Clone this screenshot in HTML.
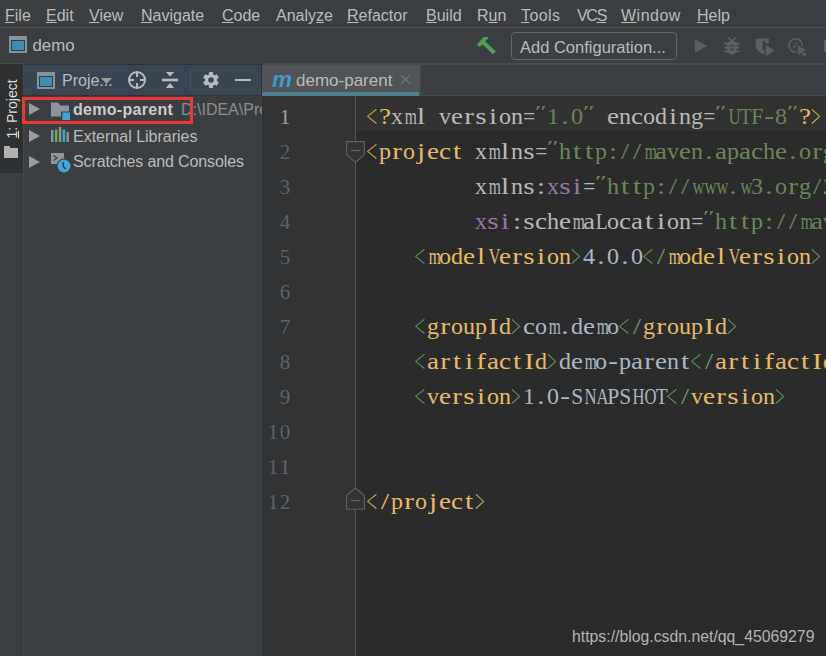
<!DOCTYPE html>
<html><head><meta charset="utf-8">
<style>
*{margin:0;padding:0;box-sizing:border-box}
html,body{width:826px;height:656px;overflow:hidden;background:#3c3f41}
body{position:relative;font-family:"Liberation Sans",sans-serif}
.a{position:absolute}
.t{position:absolute;white-space:pre;line-height:16px;font-size:16px;color:#bbbbbb}
.u{text-decoration:underline;text-underline-offset:1px}
.code{position:absolute;left:367px;white-space:pre;font-family:"Liberation Mono",monospace;font-size:20px;line-height:20px;color:#a9b7c6}
.ln{position:absolute;white-space:pre;font-family:"Liberation Mono",monospace;font-size:20px;line-height:20px;color:#606366;text-align:right;width:30px;left:261px}
.tg{color:#e3bb69}
.b{display:inline-block;vertical-align:top}
.q{display:inline-block;transform:translate(-2px,-6px) scaleY(0.7)}
.at{color:#b8b8b8}
.vl{color:#6a8759}
.ns{color:#9876aa}
.tx{color:#a9b7c6}
.c{display:inline-block;width:12px;text-align:center;font-family:"Liberation Serif",serif;font-weight:normal;font-size:22.5px;transform:translateY(-2px)}
.ln .c{font-size:21px;transform:translateY(-1px)}
</style></head><body>
<!-- menu bar -->
<div class="a" style="left:0;top:0;width:826px;height:27px;background:#3c3f41"></div>
<div class="a" style="left:0;top:27px;width:826px;height:1px;background:#515355"></div>
<div class="t" style="left:5px;top:8px"><span class="u">F</span>ile</div>
<div class="t" style="left:46px;top:8px"><span class="u">E</span>dit</div>
<div class="t" style="left:89px;top:8px"><span class="u">V</span>iew</div>
<div class="t" style="left:141px;top:8px"><span class="u">N</span>avigate</div>
<div class="t" style="left:222px;top:8px"><span class="u">C</span>ode</div>
<div class="t" style="left:276px;top:8px">Analy<span class="u">z</span>e</div>
<div class="t" style="left:347px;top:8px"><span class="u">R</span>efactor</div>
<div class="t" style="left:426px;top:8px"><span class="u">B</span>uild</div>
<div class="t" style="left:477px;top:8px">R<span class="u">u</span>n</div>
<div class="t" style="left:521px;top:8px;letter-spacing:0.4px"><span class="u">T</span>ools</div>
<div class="t" style="left:577px;top:8px;letter-spacing:-1.3px">VC<span class="u">S</span></div>
<div class="t" style="left:621px;top:8px;letter-spacing:0.5px"><span class="u">W</span>indow</div>
<div class="t" style="left:697px;top:8px"><span class="u">H</span>elp</div>

<!-- nav bar -->
<div class="a" style="left:9px;top:36px;width:18px;height:17px;background:#8a9299"></div>
<div class="a" style="left:11px;top:40px;width:14px;height:11px;background:#2f3d48"></div>
<div class="a" style="left:12px;top:41px;width:12px;height:9px;background:#3e8eb1"></div>
<div class="t" style="left:32.5px;top:38px;font-size:16.8px">demo</div>
<!-- hammer -->
<svg class="a" style="left:472px;top:32px" width="30" height="28" viewBox="0 0 30 28">
<path d="M5 12.4 L11.7 5 L16.2 5.1 L16.2 6.4 L13 9.2 L23.9 19.2 L20.9 22.4 L10.5 12.2 L7.5 14.9 Z" fill="#4b9f56"/>
</svg>
<div class="a" style="left:511px;top:32px;width:166px;height:28px;border:1px solid #646769;border-radius:4px"></div>
<div class="t" style="left:520px;top:39px;font-size:16.5px">Add Configuration...</div>
<!-- run icons -->
<svg class="a" style="left:686px;top:30px" width="140" height="32" viewBox="686 30 140 32">
<g fill="#5c5f61">
<path d="M694.8 9.3 L707.2 16.1 L694.8 22.9 Z" transform="translate(0 30)"/>
<path d="M728 37.6 L731.8 41 L735.6 37.6" stroke="#5c5f61" stroke-width="1.6" fill="none"/>
<ellipse cx="732" cy="47.6" rx="5.2" ry="7.2"/>
<rect x="724" y="42.6" width="15.6" height="1.8"/>
<rect x="724" y="46.6" width="15.6" height="1.8"/>
<rect x="724" y="50.6" width="15.6" height="1.8"/>
</g>
<g fill="#3c3f41">
<rect x="730.2" y="45" width="4" height="1.4"/>
<rect x="730.2" y="48.6" width="4" height="1.4"/>
</g>
<path d="M755.8 38.8 Q762.6 37.6 769 38.8 L769 47.5 Q766.5 52 762.6 54.2 Q758 51.8 755.8 48 Z" fill="#5c5f61"/>
<rect x="762.6" y="41" width="2.6" height="9.5" fill="#3c3f41"/>
<path d="M765.2 43.2 L770 43.2 L770 56 L765.2 56 Z" fill="#3c3f41"/>
<path d="M765.9 45 L774.9 50.5 L765.9 56 Z" fill="#5c5f61"/>
<circle cx="795.6" cy="45.4" r="6.7" fill="none" stroke="#5c5f61" stroke-width="1.6"/>
<path d="M796.4 42 L796.1 45.1 L793.4 47.6" stroke="#5c5f61" stroke-width="1.3" fill="none"/>
<path d="M797.2 44 L808 50.7 L803.5 51.8 L807.8 54 L804.5 57.5 L801 53.5 L797.2 56.5 Z" fill="#5c5f61" stroke="#3c3f41" stroke-width="1.2"/>
<rect x="824" y="39.8" width="3" height="12.3" fill="#5c5f61"/>
</svg>

<!-- nav bottom border -->
<div class="a" style="left:0;top:63px;width:24px;height:1px;background:#4a4a4a"></div>
<div class="a" style="left:24px;top:64px;width:238px;height:1px;background:#323232"></div>

<!-- left stripe -->
<div class="a" style="left:0;top:64px;width:23px;height:592px;background:#3c3f41"></div>
<div class="a" style="left:0;top:64px;width:23px;height:109px;background:#2e3031"></div>
<div class="a" style="left:23px;top:63px;width:1px;height:593px;background:#4a4a4a"></div>
<div class="t" style="left:-19.6px;top:101px;width:64px;text-align:center;transform:rotate(-90deg);font-size:14px;color:#dddddd"><span class="u">1</span>: Project</div>
<div class="a" style="left:4px;top:146px;width:6px;height:3px;background:#afb1b3"></div>
<div class="a" style="left:4px;top:148px;width:14px;height:10px;background:#afb1b3"></div>

<!-- project panel header -->
<div class="a" style="left:24px;top:65px;width:237px;height:30px;background:#3a4553"></div>
<div class="a" style="left:23px;top:95px;width:238px;height:1px;background:#323232"></div>
<div class="a" style="left:37px;top:72px;width:18px;height:17px;background:#8a9299"></div>
<div class="a" style="left:39px;top:76px;width:14px;height:11px;background:#2f3d48"></div>
<div class="a" style="left:40px;top:77px;width:12px;height:9px;background:#3e8eb1"></div>
<div class="t" style="left:62px;top:73px">Proje...</div>
<svg class="a" style="left:101px;top:78px" width="12" height="7"><path d="M0 0 L11 0 L5.5 6 Z" fill="#9a9c9e"/></svg>
<!-- locate -->
<svg class="a" style="left:127px;top:70px" width="20" height="20" viewBox="0 0 20 20">
<circle cx="10" cy="10" r="8" fill="none" stroke="#b9babb" stroke-width="2"/>
<rect x="9" y="2" width="2" height="5" fill="#b9babb"/>
<rect x="9" y="13" width="2" height="5" fill="#b9babb"/>
<rect x="2" y="9" width="5" height="2" fill="#b9babb"/>
<rect x="13" y="9" width="5" height="2" fill="#b9babb"/>
</svg>
<!-- collapse -->
<svg class="a" style="left:162px;top:72px" width="16" height="16" viewBox="0 0 16 16">
<path d="M3.8 0 L12.2 0 L8 4.5 Z" fill="#b9babb"/>
<rect x="0" y="6.7" width="16" height="2.6" fill="#b9babb"/>
<path d="M8 11 L12.2 16 L3.8 16 Z" fill="#b9babb"/>
</svg>
<div class="a" style="left:190px;top:68px;width:1px;height:23px;background:#4a5360"></div>
<!-- gear -->
<svg class="a" style="left:203px;top:72px" width="16" height="16" viewBox="0 0 16 16">
<g fill="#b9babb">
<circle cx="8" cy="8" r="6"/>
<rect x="5.9" y="0" width="4.2" height="16" rx="0.8"/>
<rect x="5.9" y="0" width="4.2" height="16" rx="0.8" transform="rotate(60 8 8)"/>
<rect x="5.9" y="0" width="4.2" height="16" rx="0.8" transform="rotate(-60 8 8)"/>
</g>
<circle cx="8" cy="8" r="2.8" fill="#3a4553"/>
</svg>
<div class="a" style="left:235px;top:79px;width:16px;height:2px;background:#b9babb"></div>

<!-- project tree -->
<div class="a" style="left:261px;top:64px;width:1px;height:32px;background:#323232"></div>
<!-- row1 -->
<svg class="a" style="left:29px;top:103px" width="11" height="13"><path d="M0 0 L11 6 L0 12 Z" fill="#9c9c9c"/></svg>
<svg class="a" style="left:51px;top:102px" width="20" height="19" viewBox="0 0 20 19">
<path d="M0 0.5 L7 0.5 L9.5 3.5 L18 3.5 L18 14.5 L0 14.5 Z" fill="#8c959c"/>
<rect x="10" y="9.5" width="10" height="9.5" fill="#3c3f41"/>
<rect x="11.4" y="10.5" width="7.6" height="7.5" fill="#40a5dd"/>
</svg>
<div class="t" style="left:73px;top:102px;font-weight:bold;letter-spacing:0.3px;color:#cccccc">demo-parent</div>
<div class="t" style="left:181px;top:102px;color:#8c8c8c">D:\IDEA\Pro</div>
<!-- row2 -->
<svg class="a" style="left:29px;top:130px" width="11" height="13"><path d="M0 0 L11 6 L0 12 Z" fill="#9c9c9c"/></svg>
<svg class="a" style="left:51px;top:126px" width="18" height="16" viewBox="0 0 18 16">
<rect x="0" y="4" width="2.4" height="12" fill="#8c959c"/>
<rect x="3.9" y="3.5" width="2.5" height="12.5" fill="#62b543"/>
<rect x="7.9" y="1" width="2.4" height="15" fill="#8c959c"/>
<rect x="11.7" y="3.5" width="2.4" height="12.5" fill="#40a5dd"/>
<rect x="15.5" y="6" width="2.4" height="10" fill="#8c959c"/>
</svg>
<div class="t" style="left:73px;top:129px">External Libraries</div>
<!-- row3 -->
<svg class="a" style="left:29px;top:156px" width="11" height="13"><path d="M0 0 L11 6 L0 12 Z" fill="#9c9c9c"/></svg>
<svg class="a" style="left:51px;top:152px" width="21" height="21" viewBox="0 0 21 21">
<rect x="0" y="1" width="13" height="11" fill="#8c959c"/>
<path d="M2.5 3.5 L6 6 L2.5 8.5" stroke="#3c3f41" stroke-width="1.2" fill="none"/>
<circle cx="13" cy="14" r="7.5" fill="#3c3f41"/>
<circle cx="13" cy="14" r="6.4" fill="#40a5dd"/>
<path d="M12.3 10 L12.3 14.5 L14.8 17" stroke="#3c3f41" stroke-width="1.5" fill="none"/>
</svg>
<div class="t" style="left:73px;top:154px;letter-spacing:-0.12px">Scratches and Consoles</div>
<!-- red highlight box -->
<div class="a" style="left:22px;top:97px;width:171px;height:27px;border:3px solid #f03535"></div>

<!-- editor tabs -->
<div class="a" style="left:262px;top:63px;width:564px;height:33px;background:#3c3f41"></div>
<div class="a" style="left:262px;top:63px;width:564px;height:2px;background:#4b4b4b"></div>
<div class="a" style="left:421px;top:95px;width:405px;height:1px;background:#4b4b4b"></div>
<div class="a" style="left:262px;top:65px;width:157px;height:27px;background:#505456"></div>
<div class="a" style="left:262px;top:92px;width:157px;height:4px;background:#4b8193"></div>
<div class="a" style="left:419px;top:63px;width:2px;height:33px;background:#4b4b4b"></div>
<div class="t" style="left:272px;top:69px;font-size:22.5px;line-height:22px;font-weight:bold;font-style:italic;color:#3e9cc6">m</div>
<div class="t" style="left:296px;top:72px;font-size:17px;line-height:17px;color:#bbbbbb">demo-parent</div>
<svg class="a" style="left:400px;top:74.3px" width="12" height="11"><path d="M1 1 L10 10 M10 1 L1 10" stroke="#6e7173" stroke-width="1.3"/></svg>

<!-- editor -->
<div class="a" style="left:262px;top:96px;width:93px;height:560px;background:#313335"></div>
<div class="a" style="left:355px;top:96px;width:1px;height:560px;background:#555555"></div>
<div class="a" style="left:356px;top:96px;width:470px;height:560px;background:#2b2b2b"></div>
<div class="a" style="left:356px;top:96px;width:470px;height:35px;background:#323232"></div>

<!-- fold markers -->
<svg class="a" style="left:340px;top:136px" width="30" height="30" viewBox="340 136 30 30">
<path d="M346.6 141.6 L364.4 141.6 L364.4 154.8 L355.5 162.2 L346.6 154.8 Z" fill="#313335" stroke="#5f6264" stroke-width="1.1"/>
<rect x="351" y="150" width="9" height="1.1" fill="#65686a"/>
</svg>
<svg class="a" style="left:340px;top:484px" width="30" height="30" viewBox="340 484 30 30">
<path d="M355.5 488 L364.4 495.6 L364.4 509.3 L346.6 509.3 L346.6 495.6 Z" fill="#313335" stroke="#5f6264" stroke-width="1.1"/>
<rect x="351" y="500" width="9" height="1.1" fill="#65686a"/>
</svg>
<!-- line numbers -->
<div class="ln" style="top:108px;color:#a4a3a3"><b class="c">1</b></div>
<div class="ln" style="top:143px"><b class="c">2</b></div>
<div class="ln" style="top:178px"><b class="c">3</b></div>
<div class="ln" style="top:213px"><b class="c">4</b></div>
<div class="ln" style="top:248px"><b class="c">5</b></div>
<div class="ln" style="top:283px"><b class="c">6</b></div>
<div class="ln" style="top:318px"><b class="c">7</b></div>
<div class="ln" style="top:353px"><b class="c">8</b></div>
<div class="ln" style="top:388px"><b class="c">9</b></div>
<div class="ln" style="top:423px"><b class="c">1</b><b class="c">0</b></div>
<div class="ln" style="top:458px"><b class="c">1</b><b class="c">1</b></div>
<div class="ln" style="top:493px"><b class="c">1</b><b class="c">2</b></div>

<!-- code -->
<div class="code" style="top:109px"><span class="tg"><svg class="b" width="12" height="20" viewBox="0 0 12 20"><path d="M9.4 0.3 L0.6 7.4 L9.4 14.5" fill="none" stroke="#c4aa5a" stroke-width="1.1"/></svg><b class="c" style="transform:translateY(-2px) scaleX(1.20)">?</b></span><span class="at"><b class="c" style="transform:translateY(-2px) scaleX(1.07)">x</b><b class="c" style="transform:translateY(-2px) scaleX(0.69)">m</b><b class="c" style="transform:translateY(-2px) scaleX(1.30)">l</b><b class="c"> </b><b class="c" style="transform:translateY(-2px) scaleX(1.07)">v</b><b class="c" style="transform:translateY(-2px) scaleX(1.20)">e</b><b class="c" style="transform:translateY(-2px) scaleX(1.30)">r</b><b class="c" style="transform:translateY(-2px) scaleX(1.30)">s</b><b class="c" style="transform:translateY(-2px) scaleX(1.30)">i</b><b class="c" style="transform:translateY(-2px) scaleX(1.07)">o</b><b class="c" style="transform:translateY(-2px) scaleX(1.07)">n</b></span><b class="c" style="transform:translateY(-2px) scaleX(0.95)">=</b><span class="vl"><i class="q"><b class="c" style="transform:translateY(-2px) scaleX(1.28)">″</b></i><b class="c" style="transform:translateY(-2px) scaleX(1.07)">1</b><b class="c" style="transform:translateY(-2px) scaleX(1.30)">.</b><b class="c" style="transform:translateY(-2px) scaleX(1.07)">0</b><i class="q"><b class="c" style="transform:translateY(-2px) scaleX(1.28)">″</b></i></span><b class="c"> </b><span class="at"><b class="c" style="transform:translateY(-2px) scaleX(1.20)">e</b><b class="c" style="transform:translateY(-2px) scaleX(1.07)">n</b><b class="c" style="transform:translateY(-2px) scaleX(1.20)">c</b><b class="c" style="transform:translateY(-2px) scaleX(1.07)">o</b><b class="c" style="transform:translateY(-2px) scaleX(1.07)">d</b><b class="c" style="transform:translateY(-2px) scaleX(1.30)">i</b><b class="c" style="transform:translateY(-2px) scaleX(1.07)">n</b><b class="c" style="transform:translateY(-2px) scaleX(1.07)">g</b></span><b class="c" style="transform:translateY(-2px) scaleX(0.95)">=</b><span class="vl"><i class="q"><b class="c" style="transform:translateY(-2px) scaleX(1.28)">″</b></i><b class="c" style="transform:translateY(-2px) scaleX(0.74)">U</b><b class="c" style="transform:translateY(-2px) scaleX(0.87)">T</b><b class="c" style="transform:translateY(-2px) scaleX(0.96)">F</b><b class="c" style="transform:translateY(-2px) scaleX(1.30)">-</b><b class="c" style="transform:translateY(-2px) scaleX(1.07)">8</b><i class="q"><b class="c" style="transform:translateY(-2px) scaleX(1.28)">″</b></i></span><span class="tg"><b class="c" style="transform:translateY(-2px) scaleX(1.20)">?</b><svg class="b" width="12" height="20" viewBox="0 0 12 20"><path d="M0.9 0.3 L8.6 7.4 L0.9 14.5" fill="none" stroke="#c4aa5a" stroke-width="1.1"/></svg></span></div>
<div class="code" style="top:144px"><span class="tg"><svg class="b" width="12" height="20" viewBox="0 0 12 20"><path d="M9.4 0.3 L0.6 7.4 L9.4 14.5" fill="none" stroke="#c4aa5a" stroke-width="1.1"/></svg><b class="c" style="transform:translateY(-2px) scaleX(1.07)">p</b><b class="c" style="transform:translateY(-2px) scaleX(1.30)">r</b><b class="c" style="transform:translateY(-2px) scaleX(1.07)">o</b><b class="c" style="transform:translateY(-2px) scaleX(1.30)">j</b><b class="c" style="transform:translateY(-2px) scaleX(1.20)">e</b><b class="c" style="transform:translateY(-2px) scaleX(1.20)">c</b><b class="c" style="transform:translateY(-2px) scaleX(1.30)">t</b><b class="c"> </b></span><span class="at"><b class="c" style="transform:translateY(-2px) scaleX(1.07)">x</b><b class="c" style="transform:translateY(-2px) scaleX(0.69)">m</b><b class="c" style="transform:translateY(-2px) scaleX(1.30)">l</b><b class="c" style="transform:translateY(-2px) scaleX(1.07)">n</b><b class="c" style="transform:translateY(-2px) scaleX(1.30)">s</b></span><b class="c" style="transform:translateY(-2px) scaleX(0.95)">=</b><span class="vl"><i class="q"><b class="c" style="transform:translateY(-2px) scaleX(1.28)">″</b></i><b class="c" style="transform:translateY(-2px) scaleX(1.07)">h</b><b class="c" style="transform:translateY(-2px) scaleX(1.30)">t</b><b class="c" style="transform:translateY(-2px) scaleX(1.30)">t</b><b class="c" style="transform:translateY(-2px) scaleX(1.07)">p</b><b class="c" style="transform:translateY(-2px) scaleX(1.30)">:</b><b class="c" style="transform:translateY(-2px) scaleX(1.30)">/</b><b class="c" style="transform:translateY(-2px) scaleX(1.30)">/</b><b class="c" style="transform:translateY(-2px) scaleX(0.69)">m</b><b class="c" style="transform:translateY(-2px) scaleX(1.20)">a</b><b class="c" style="transform:translateY(-2px) scaleX(1.07)">v</b><b class="c" style="transform:translateY(-2px) scaleX(1.20)">e</b><b class="c" style="transform:translateY(-2px) scaleX(1.07)">n</b><b class="c" style="transform:translateY(-2px) scaleX(1.30)">.</b><b class="c" style="transform:translateY(-2px) scaleX(1.20)">a</b><b class="c" style="transform:translateY(-2px) scaleX(1.07)">p</b><b class="c" style="transform:translateY(-2px) scaleX(1.20)">a</b><b class="c" style="transform:translateY(-2px) scaleX(1.20)">c</b><b class="c" style="transform:translateY(-2px) scaleX(1.07)">h</b><b class="c" style="transform:translateY(-2px) scaleX(1.20)">e</b><b class="c" style="transform:translateY(-2px) scaleX(1.30)">.</b><b class="c" style="transform:translateY(-2px) scaleX(1.07)">o</b><b class="c" style="transform:translateY(-2px) scaleX(1.30)">r</b><b class="c" style="transform:translateY(-2px) scaleX(1.07)">g</b><b class="c" style="transform:translateY(-2px) scaleX(1.30)">/</b><b class="c" style="transform:translateY(-2px) scaleX(0.96)">P</b><b class="c" style="transform:translateY(-2px) scaleX(0.74)">O</b><b class="c" style="transform:translateY(-2px) scaleX(0.60)">M</b><b class="c" style="transform:translateY(-2px) scaleX(1.30)">/</b><b class="c" style="transform:translateY(-2px) scaleX(1.07)">4</b><b class="c" style="transform:translateY(-2px) scaleX(1.30)">.</b><b class="c" style="transform:translateY(-2px) scaleX(1.07)">0</b><b class="c" style="transform:translateY(-2px) scaleX(1.30)">.</b><b class="c" style="transform:translateY(-2px) scaleX(1.07)">0</b><i class="q"><b class="c" style="transform:translateY(-2px) scaleX(1.28)">″</b></i></span></div>
<div class="code" style="top:179px"><b class="c"> </b><b class="c"> </b><b class="c"> </b><b class="c"> </b><b class="c"> </b><b class="c"> </b><b class="c"> </b><b class="c"> </b><b class="c"> </b><span class="at"><b class="c" style="transform:translateY(-2px) scaleX(1.07)">x</b><b class="c" style="transform:translateY(-2px) scaleX(0.69)">m</b><b class="c" style="transform:translateY(-2px) scaleX(1.30)">l</b><b class="c" style="transform:translateY(-2px) scaleX(1.07)">n</b><b class="c" style="transform:translateY(-2px) scaleX(1.30)">s</b></span><b class="c" style="transform:translateY(-2px) scaleX(1.30)">:</b><span class="ns"><b class="c" style="transform:translateY(-2px) scaleX(1.07)">x</b><b class="c" style="transform:translateY(-2px) scaleX(1.30)">s</b><b class="c" style="transform:translateY(-2px) scaleX(1.30)">i</b></span><b class="c" style="transform:translateY(-2px) scaleX(0.95)">=</b><span class="vl"><i class="q"><b class="c" style="transform:translateY(-2px) scaleX(1.28)">″</b></i><b class="c" style="transform:translateY(-2px) scaleX(1.07)">h</b><b class="c" style="transform:translateY(-2px) scaleX(1.30)">t</b><b class="c" style="transform:translateY(-2px) scaleX(1.30)">t</b><b class="c" style="transform:translateY(-2px) scaleX(1.07)">p</b><b class="c" style="transform:translateY(-2px) scaleX(1.30)">:</b><b class="c" style="transform:translateY(-2px) scaleX(1.30)">/</b><b class="c" style="transform:translateY(-2px) scaleX(1.30)">/</b><b class="c" style="transform:translateY(-2px) scaleX(0.74)">w</b><b class="c" style="transform:translateY(-2px) scaleX(0.74)">w</b><b class="c" style="transform:translateY(-2px) scaleX(0.74)">w</b><b class="c" style="transform:translateY(-2px) scaleX(1.30)">.</b><b class="c" style="transform:translateY(-2px) scaleX(0.74)">w</b><b class="c" style="transform:translateY(-2px) scaleX(1.07)">3</b><b class="c" style="transform:translateY(-2px) scaleX(1.30)">.</b><b class="c" style="transform:translateY(-2px) scaleX(1.07)">o</b><b class="c" style="transform:translateY(-2px) scaleX(1.30)">r</b><b class="c" style="transform:translateY(-2px) scaleX(1.07)">g</b><b class="c" style="transform:translateY(-2px) scaleX(1.30)">/</b><b class="c" style="transform:translateY(-2px) scaleX(1.07)">2</b><b class="c" style="transform:translateY(-2px) scaleX(1.07)">0</b><b class="c" style="transform:translateY(-2px) scaleX(1.07)">0</b><b class="c" style="transform:translateY(-2px) scaleX(1.07)">1</b><b class="c" style="transform:translateY(-2px) scaleX(1.30)">/</b><b class="c" style="transform:translateY(-2px) scaleX(0.74)">X</b><b class="c" style="transform:translateY(-2px) scaleX(0.60)">M</b><b class="c" style="transform:translateY(-2px) scaleX(0.87)">L</b><b class="c" style="transform:translateY(-2px) scaleX(0.96)">S</b><b class="c" style="transform:translateY(-2px) scaleX(1.20)">c</b><b class="c" style="transform:translateY(-2px) scaleX(1.07)">h</b><b class="c" style="transform:translateY(-2px) scaleX(1.20)">e</b><b class="c" style="transform:translateY(-2px) scaleX(0.69)">m</b><b class="c" style="transform:translateY(-2px) scaleX(1.20)">a</b><b class="c" style="transform:translateY(-2px) scaleX(1.30)">-</b><b class="c" style="transform:translateY(-2px) scaleX(1.30)">i</b><b class="c" style="transform:translateY(-2px) scaleX(1.07)">n</b><b class="c" style="transform:translateY(-2px) scaleX(1.30)">s</b><b class="c" style="transform:translateY(-2px) scaleX(1.30)">t</b><b class="c" style="transform:translateY(-2px) scaleX(1.20)">a</b><b class="c" style="transform:translateY(-2px) scaleX(1.07)">n</b><b class="c" style="transform:translateY(-2px) scaleX(1.20)">c</b><b class="c" style="transform:translateY(-2px) scaleX(1.20)">e</b><i class="q"><b class="c" style="transform:translateY(-2px) scaleX(1.28)">″</b></i></span></div>
<div class="code" style="top:214px"><b class="c"> </b><b class="c"> </b><b class="c"> </b><b class="c"> </b><b class="c"> </b><b class="c"> </b><b class="c"> </b><b class="c"> </b><b class="c"> </b><span class="ns"><b class="c" style="transform:translateY(-2px) scaleX(1.07)">x</b><b class="c" style="transform:translateY(-2px) scaleX(1.30)">s</b><b class="c" style="transform:translateY(-2px) scaleX(1.30)">i</b></span><b class="c" style="transform:translateY(-2px) scaleX(1.30)">:</b><span class="at"><b class="c" style="transform:translateY(-2px) scaleX(1.30)">s</b><b class="c" style="transform:translateY(-2px) scaleX(1.20)">c</b><b class="c" style="transform:translateY(-2px) scaleX(1.07)">h</b><b class="c" style="transform:translateY(-2px) scaleX(1.20)">e</b><b class="c" style="transform:translateY(-2px) scaleX(0.69)">m</b><b class="c" style="transform:translateY(-2px) scaleX(1.20)">a</b><b class="c" style="transform:translateY(-2px) scaleX(0.87)">L</b><b class="c" style="transform:translateY(-2px) scaleX(1.07)">o</b><b class="c" style="transform:translateY(-2px) scaleX(1.20)">c</b><b class="c" style="transform:translateY(-2px) scaleX(1.20)">a</b><b class="c" style="transform:translateY(-2px) scaleX(1.30)">t</b><b class="c" style="transform:translateY(-2px) scaleX(1.30)">i</b><b class="c" style="transform:translateY(-2px) scaleX(1.07)">o</b><b class="c" style="transform:translateY(-2px) scaleX(1.07)">n</b></span><b class="c" style="transform:translateY(-2px) scaleX(0.95)">=</b><span class="vl"><i class="q"><b class="c" style="transform:translateY(-2px) scaleX(1.28)">″</b></i><b class="c" style="transform:translateY(-2px) scaleX(1.07)">h</b><b class="c" style="transform:translateY(-2px) scaleX(1.30)">t</b><b class="c" style="transform:translateY(-2px) scaleX(1.30)">t</b><b class="c" style="transform:translateY(-2px) scaleX(1.07)">p</b><b class="c" style="transform:translateY(-2px) scaleX(1.30)">:</b><b class="c" style="transform:translateY(-2px) scaleX(1.30)">/</b><b class="c" style="transform:translateY(-2px) scaleX(1.30)">/</b><b class="c" style="transform:translateY(-2px) scaleX(0.69)">m</b><b class="c" style="transform:translateY(-2px) scaleX(1.20)">a</b><b class="c" style="transform:translateY(-2px) scaleX(1.07)">v</b><b class="c" style="transform:translateY(-2px) scaleX(1.20)">e</b><b class="c" style="transform:translateY(-2px) scaleX(1.07)">n</b><b class="c" style="transform:translateY(-2px) scaleX(1.30)">.</b><b class="c" style="transform:translateY(-2px) scaleX(1.20)">a</b><b class="c" style="transform:translateY(-2px) scaleX(1.07)">p</b><b class="c" style="transform:translateY(-2px) scaleX(1.20)">a</b><b class="c" style="transform:translateY(-2px) scaleX(1.20)">c</b><b class="c" style="transform:translateY(-2px) scaleX(1.07)">h</b><b class="c" style="transform:translateY(-2px) scaleX(1.20)">e</b><b class="c" style="transform:translateY(-2px) scaleX(1.30)">.</b><b class="c" style="transform:translateY(-2px) scaleX(1.07)">o</b><b class="c" style="transform:translateY(-2px) scaleX(1.30)">r</b><b class="c" style="transform:translateY(-2px) scaleX(1.07)">g</b><b class="c" style="transform:translateY(-2px) scaleX(1.30)">/</b><b class="c" style="transform:translateY(-2px) scaleX(0.96)">P</b><b class="c" style="transform:translateY(-2px) scaleX(0.74)">O</b><b class="c" style="transform:translateY(-2px) scaleX(0.60)">M</b><b class="c" style="transform:translateY(-2px) scaleX(1.30)">/</b><b class="c" style="transform:translateY(-2px) scaleX(1.07)">4</b><b class="c" style="transform:translateY(-2px) scaleX(1.30)">.</b><b class="c" style="transform:translateY(-2px) scaleX(1.07)">0</b><b class="c" style="transform:translateY(-2px) scaleX(1.30)">.</b><b class="c" style="transform:translateY(-2px) scaleX(1.07)">0</b><i class="q"><b class="c" style="transform:translateY(-2px) scaleX(1.28)">″</b></i></span></div>
<div class="code" style="top:249px"><b class="c"> </b><b class="c"> </b><b class="c"> </b><b class="c"> </b><span class="tg"><svg class="b" width="12" height="20" viewBox="0 0 12 20"><path d="M9.4 0.3 L0.6 7.4 L9.4 14.5" fill="none" stroke="#579556" stroke-width="1.1"/></svg><b class="c" style="transform:translateY(-2px) scaleX(0.69)">m</b><b class="c" style="transform:translateY(-2px) scaleX(1.07)">o</b><b class="c" style="transform:translateY(-2px) scaleX(1.07)">d</b><b class="c" style="transform:translateY(-2px) scaleX(1.20)">e</b><b class="c" style="transform:translateY(-2px) scaleX(1.30)">l</b><b class="c" style="transform:translateY(-2px) scaleX(0.74)">V</b><b class="c" style="transform:translateY(-2px) scaleX(1.20)">e</b><b class="c" style="transform:translateY(-2px) scaleX(1.30)">r</b><b class="c" style="transform:translateY(-2px) scaleX(1.30)">s</b><b class="c" style="transform:translateY(-2px) scaleX(1.30)">i</b><b class="c" style="transform:translateY(-2px) scaleX(1.07)">o</b><b class="c" style="transform:translateY(-2px) scaleX(1.07)">n</b><svg class="b" width="12" height="20" viewBox="0 0 12 20"><path d="M0.9 0.3 L8.6 7.4 L0.9 14.5" fill="none" stroke="#579556" stroke-width="1.1"/></svg></span><b class="c" style="transform:translateY(-2px) scaleX(1.07)">4</b><b class="c" style="transform:translateY(-2px) scaleX(1.30)">.</b><b class="c" style="transform:translateY(-2px) scaleX(1.07)">0</b><b class="c" style="transform:translateY(-2px) scaleX(1.30)">.</b><b class="c" style="transform:translateY(-2px) scaleX(1.07)">0</b><span class="tg"><svg class="b" width="12" height="20" viewBox="0 0 12 20"><path d="M9.4 0.3 L0.6 7.4 L9.4 14.5" fill="none" stroke="#579556" stroke-width="1.1"/></svg><span style="color:#6a9a5e"><b class="c" style="transform:translateY(-2px) scaleX(1.30)">/</b></span><b class="c" style="transform:translateY(-2px) scaleX(0.69)">m</b><b class="c" style="transform:translateY(-2px) scaleX(1.07)">o</b><b class="c" style="transform:translateY(-2px) scaleX(1.07)">d</b><b class="c" style="transform:translateY(-2px) scaleX(1.20)">e</b><b class="c" style="transform:translateY(-2px) scaleX(1.30)">l</b><b class="c" style="transform:translateY(-2px) scaleX(0.74)">V</b><b class="c" style="transform:translateY(-2px) scaleX(1.20)">e</b><b class="c" style="transform:translateY(-2px) scaleX(1.30)">r</b><b class="c" style="transform:translateY(-2px) scaleX(1.30)">s</b><b class="c" style="transform:translateY(-2px) scaleX(1.30)">i</b><b class="c" style="transform:translateY(-2px) scaleX(1.07)">o</b><b class="c" style="transform:translateY(-2px) scaleX(1.07)">n</b><svg class="b" width="12" height="20" viewBox="0 0 12 20"><path d="M0.9 0.3 L8.6 7.4 L0.9 14.5" fill="none" stroke="#579556" stroke-width="1.1"/></svg></span></div>
<div class="code" style="top:319px"><b class="c"> </b><b class="c"> </b><b class="c"> </b><b class="c"> </b><span class="tg"><svg class="b" width="12" height="20" viewBox="0 0 12 20"><path d="M9.4 0.3 L0.6 7.4 L9.4 14.5" fill="none" stroke="#579556" stroke-width="1.1"/></svg><b class="c" style="transform:translateY(-2px) scaleX(1.07)">g</b><b class="c" style="transform:translateY(-2px) scaleX(1.30)">r</b><b class="c" style="transform:translateY(-2px) scaleX(1.07)">o</b><b class="c" style="transform:translateY(-2px) scaleX(1.07)">u</b><b class="c" style="transform:translateY(-2px) scaleX(1.07)">p</b><b class="c" style="transform:translateY(-2px) scaleX(1.30)">I</b><b class="c" style="transform:translateY(-2px) scaleX(1.07)">d</b><svg class="b" width="12" height="20" viewBox="0 0 12 20"><path d="M0.9 0.3 L8.6 7.4 L0.9 14.5" fill="none" stroke="#579556" stroke-width="1.1"/></svg></span><b class="c" style="transform:translateY(-2px) scaleX(1.20)">c</b><b class="c" style="transform:translateY(-2px) scaleX(1.07)">o</b><b class="c" style="transform:translateY(-2px) scaleX(0.69)">m</b><b class="c" style="transform:translateY(-2px) scaleX(1.30)">.</b><b class="c" style="transform:translateY(-2px) scaleX(1.07)">d</b><b class="c" style="transform:translateY(-2px) scaleX(1.20)">e</b><b class="c" style="transform:translateY(-2px) scaleX(0.69)">m</b><b class="c" style="transform:translateY(-2px) scaleX(1.07)">o</b><span class="tg"><svg class="b" width="12" height="20" viewBox="0 0 12 20"><path d="M9.4 0.3 L0.6 7.4 L9.4 14.5" fill="none" stroke="#579556" stroke-width="1.1"/></svg><span style="color:#6a9a5e"><b class="c" style="transform:translateY(-2px) scaleX(1.30)">/</b></span><b class="c" style="transform:translateY(-2px) scaleX(1.07)">g</b><b class="c" style="transform:translateY(-2px) scaleX(1.30)">r</b><b class="c" style="transform:translateY(-2px) scaleX(1.07)">o</b><b class="c" style="transform:translateY(-2px) scaleX(1.07)">u</b><b class="c" style="transform:translateY(-2px) scaleX(1.07)">p</b><b class="c" style="transform:translateY(-2px) scaleX(1.30)">I</b><b class="c" style="transform:translateY(-2px) scaleX(1.07)">d</b><svg class="b" width="12" height="20" viewBox="0 0 12 20"><path d="M0.9 0.3 L8.6 7.4 L0.9 14.5" fill="none" stroke="#579556" stroke-width="1.1"/></svg></span></div>
<div class="code" style="top:354px"><b class="c"> </b><b class="c"> </b><b class="c"> </b><b class="c"> </b><span class="tg"><svg class="b" width="12" height="20" viewBox="0 0 12 20"><path d="M9.4 0.3 L0.6 7.4 L9.4 14.5" fill="none" stroke="#579556" stroke-width="1.1"/></svg><b class="c" style="transform:translateY(-2px) scaleX(1.20)">a</b><b class="c" style="transform:translateY(-2px) scaleX(1.30)">r</b><b class="c" style="transform:translateY(-2px) scaleX(1.30)">t</b><b class="c" style="transform:translateY(-2px) scaleX(1.30)">i</b><b class="c" style="transform:translateY(-2px) scaleX(1.30)">f</b><b class="c" style="transform:translateY(-2px) scaleX(1.20)">a</b><b class="c" style="transform:translateY(-2px) scaleX(1.20)">c</b><b class="c" style="transform:translateY(-2px) scaleX(1.30)">t</b><b class="c" style="transform:translateY(-2px) scaleX(1.30)">I</b><b class="c" style="transform:translateY(-2px) scaleX(1.07)">d</b><svg class="b" width="12" height="20" viewBox="0 0 12 20"><path d="M0.9 0.3 L8.6 7.4 L0.9 14.5" fill="none" stroke="#579556" stroke-width="1.1"/></svg></span><b class="c" style="transform:translateY(-2px) scaleX(1.07)">d</b><b class="c" style="transform:translateY(-2px) scaleX(1.20)">e</b><b class="c" style="transform:translateY(-2px) scaleX(0.69)">m</b><b class="c" style="transform:translateY(-2px) scaleX(1.07)">o</b><b class="c" style="transform:translateY(-2px) scaleX(1.30)">-</b><b class="c" style="transform:translateY(-2px) scaleX(1.07)">p</b><b class="c" style="transform:translateY(-2px) scaleX(1.20)">a</b><b class="c" style="transform:translateY(-2px) scaleX(1.30)">r</b><b class="c" style="transform:translateY(-2px) scaleX(1.20)">e</b><b class="c" style="transform:translateY(-2px) scaleX(1.07)">n</b><b class="c" style="transform:translateY(-2px) scaleX(1.30)">t</b><span class="tg"><svg class="b" width="12" height="20" viewBox="0 0 12 20"><path d="M9.4 0.3 L0.6 7.4 L9.4 14.5" fill="none" stroke="#579556" stroke-width="1.1"/></svg><span style="color:#6a9a5e"><b class="c" style="transform:translateY(-2px) scaleX(1.30)">/</b></span><b class="c" style="transform:translateY(-2px) scaleX(1.20)">a</b><b class="c" style="transform:translateY(-2px) scaleX(1.30)">r</b><b class="c" style="transform:translateY(-2px) scaleX(1.30)">t</b><b class="c" style="transform:translateY(-2px) scaleX(1.30)">i</b><b class="c" style="transform:translateY(-2px) scaleX(1.30)">f</b><b class="c" style="transform:translateY(-2px) scaleX(1.20)">a</b><b class="c" style="transform:translateY(-2px) scaleX(1.20)">c</b><b class="c" style="transform:translateY(-2px) scaleX(1.30)">t</b><b class="c" style="transform:translateY(-2px) scaleX(1.30)">I</b><b class="c" style="transform:translateY(-2px) scaleX(1.07)">d</b><svg class="b" width="12" height="20" viewBox="0 0 12 20"><path d="M0.9 0.3 L8.6 7.4 L0.9 14.5" fill="none" stroke="#579556" stroke-width="1.1"/></svg></span></div>
<div class="code" style="top:389px"><b class="c"> </b><b class="c"> </b><b class="c"> </b><b class="c"> </b><span class="tg"><svg class="b" width="12" height="20" viewBox="0 0 12 20"><path d="M9.4 0.3 L0.6 7.4 L9.4 14.5" fill="none" stroke="#579556" stroke-width="1.1"/></svg><b class="c" style="transform:translateY(-2px) scaleX(1.07)">v</b><b class="c" style="transform:translateY(-2px) scaleX(1.20)">e</b><b class="c" style="transform:translateY(-2px) scaleX(1.30)">r</b><b class="c" style="transform:translateY(-2px) scaleX(1.30)">s</b><b class="c" style="transform:translateY(-2px) scaleX(1.30)">i</b><b class="c" style="transform:translateY(-2px) scaleX(1.07)">o</b><b class="c" style="transform:translateY(-2px) scaleX(1.07)">n</b><svg class="b" width="12" height="20" viewBox="0 0 12 20"><path d="M0.9 0.3 L8.6 7.4 L0.9 14.5" fill="none" stroke="#579556" stroke-width="1.1"/></svg></span><b class="c" style="transform:translateY(-2px) scaleX(1.07)">1</b><b class="c" style="transform:translateY(-2px) scaleX(1.30)">.</b><b class="c" style="transform:translateY(-2px) scaleX(1.07)">0</b><b class="c" style="transform:translateY(-2px) scaleX(1.30)">-</b><b class="c" style="transform:translateY(-2px) scaleX(0.96)">S</b><b class="c" style="transform:translateY(-2px) scaleX(0.74)">N</b><b class="c" style="transform:translateY(-2px) scaleX(0.74)">A</b><b class="c" style="transform:translateY(-2px) scaleX(0.96)">P</b><b class="c" style="transform:translateY(-2px) scaleX(0.96)">S</b><b class="c" style="transform:translateY(-2px) scaleX(0.74)">H</b><b class="c" style="transform:translateY(-2px) scaleX(0.74)">O</b><b class="c" style="transform:translateY(-2px) scaleX(0.87)">T</b><span class="tg"><svg class="b" width="12" height="20" viewBox="0 0 12 20"><path d="M9.4 0.3 L0.6 7.4 L9.4 14.5" fill="none" stroke="#579556" stroke-width="1.1"/></svg><span style="color:#6a9a5e"><b class="c" style="transform:translateY(-2px) scaleX(1.30)">/</b></span><b class="c" style="transform:translateY(-2px) scaleX(1.07)">v</b><b class="c" style="transform:translateY(-2px) scaleX(1.20)">e</b><b class="c" style="transform:translateY(-2px) scaleX(1.30)">r</b><b class="c" style="transform:translateY(-2px) scaleX(1.30)">s</b><b class="c" style="transform:translateY(-2px) scaleX(1.30)">i</b><b class="c" style="transform:translateY(-2px) scaleX(1.07)">o</b><b class="c" style="transform:translateY(-2px) scaleX(1.07)">n</b><svg class="b" width="12" height="20" viewBox="0 0 12 20"><path d="M0.9 0.3 L8.6 7.4 L0.9 14.5" fill="none" stroke="#579556" stroke-width="1.1"/></svg></span></div>
<div class="code" style="top:494px"><span class="tg"><svg class="b" width="12" height="20" viewBox="0 0 12 20"><path d="M9.4 0.3 L0.6 7.4 L9.4 14.5" fill="none" stroke="#c4aa5a" stroke-width="1.1"/></svg><b class="c" style="transform:translateY(-2px) scaleX(1.30)">/</b><b class="c" style="transform:translateY(-2px) scaleX(1.07)">p</b><b class="c" style="transform:translateY(-2px) scaleX(1.30)">r</b><b class="c" style="transform:translateY(-2px) scaleX(1.07)">o</b><b class="c" style="transform:translateY(-2px) scaleX(1.30)">j</b><b class="c" style="transform:translateY(-2px) scaleX(1.20)">e</b><b class="c" style="transform:translateY(-2px) scaleX(1.20)">c</b><b class="c" style="transform:translateY(-2px) scaleX(1.30)">t</b><svg class="b" width="12" height="20" viewBox="0 0 12 20"><path d="M0.9 0.3 L8.6 7.4 L0.9 14.5" fill="none" stroke="#c4aa5a" stroke-width="1.1"/></svg></span></div>

<!-- watermark -->
<div class="t" style="left:572px;top:629px;font-size:15.8px;color:#b4b4b4">https://blog.csdn.net/qq_45069279</div>
</body></html>
